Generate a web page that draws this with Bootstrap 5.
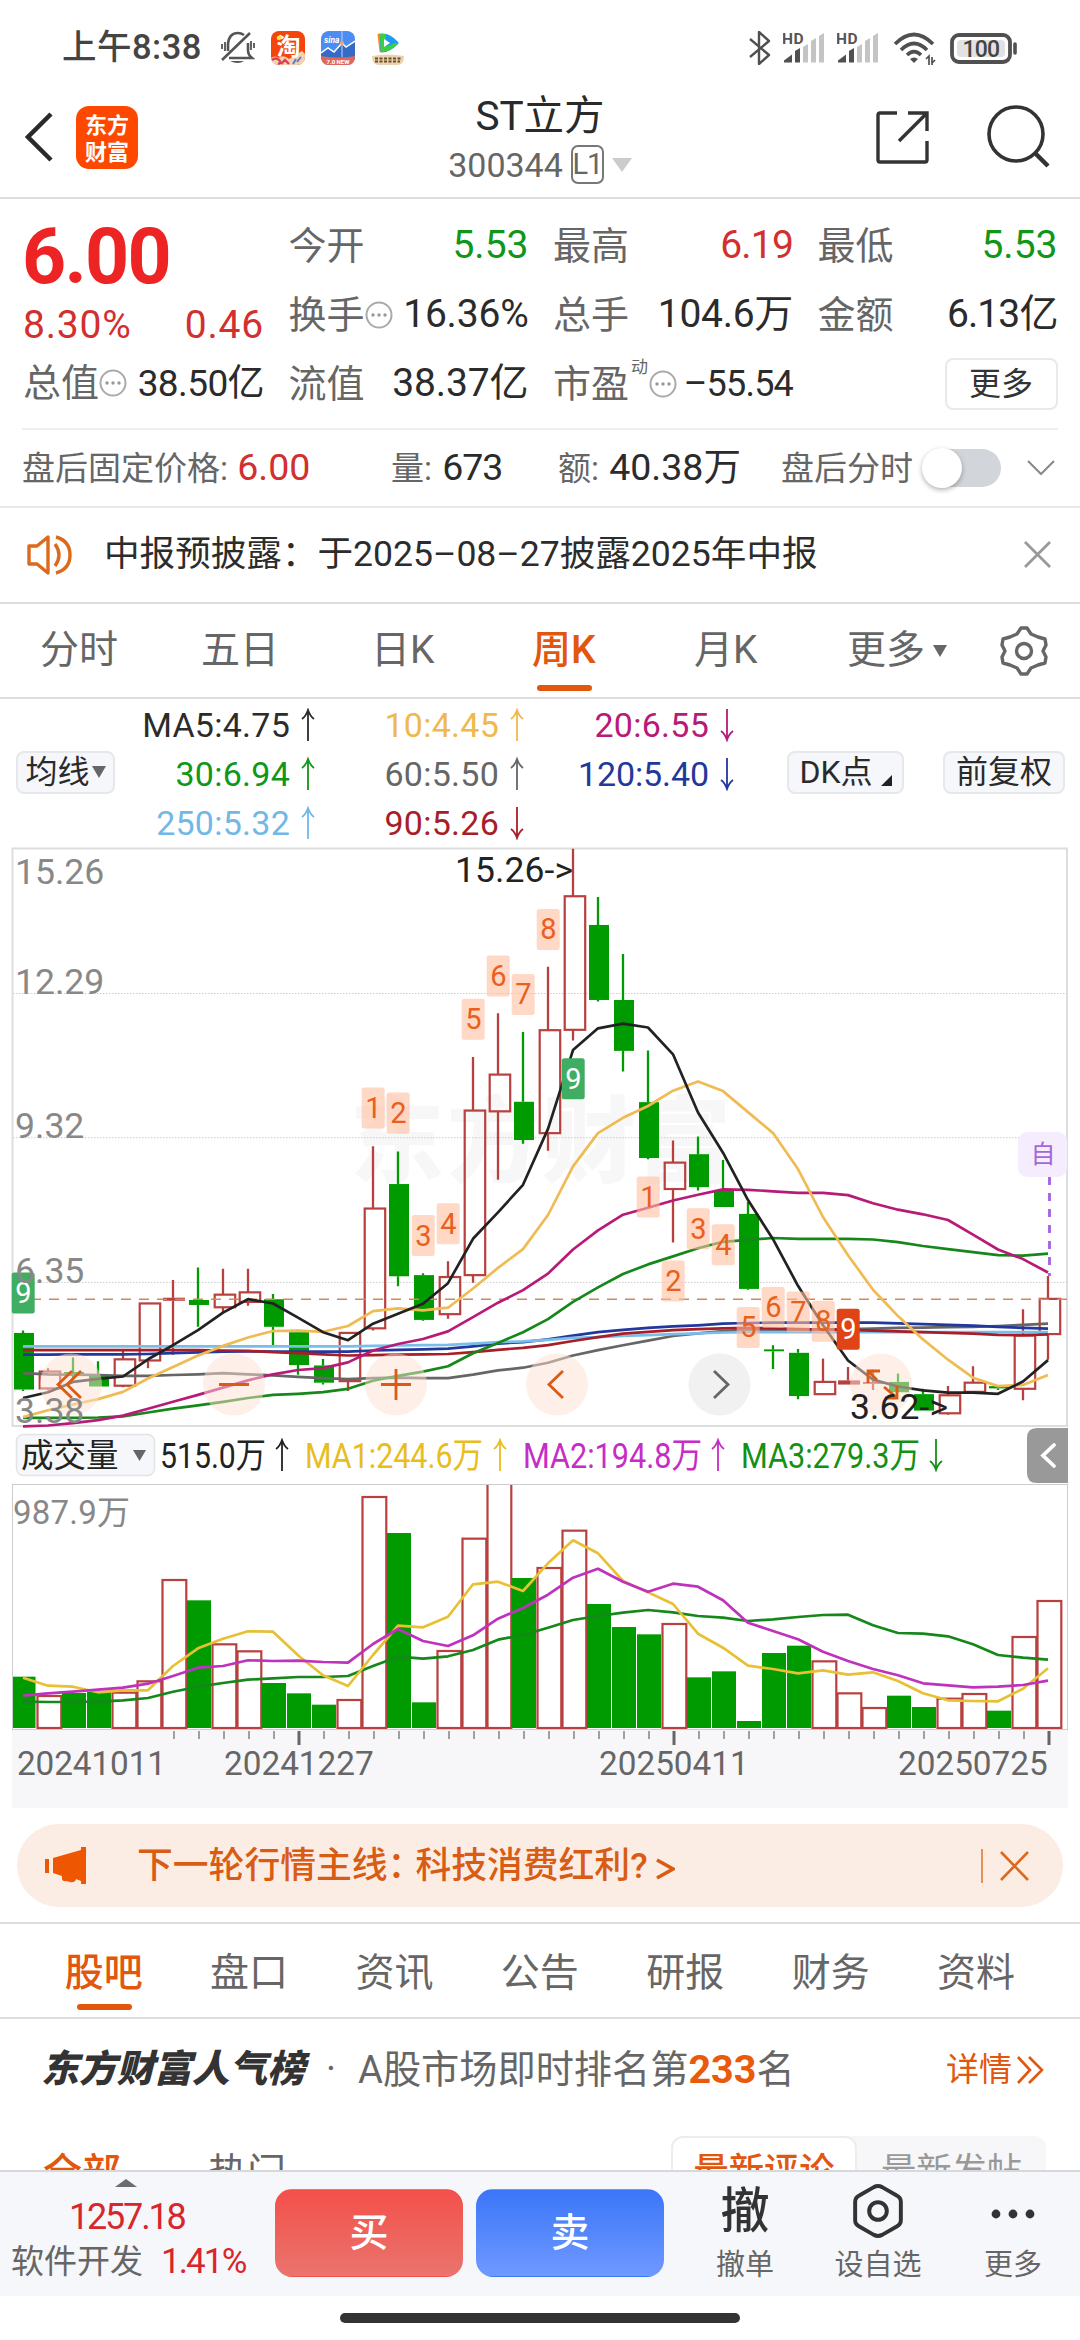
<!DOCTYPE html>
<html lang="zh-CN">
<head>
<meta charset="utf-8">
<meta name="viewport" content="width=1080">
<title>ST立方 300344</title>
<link href="https://cdn.jsdelivr.net/npm/bootstrap@5.3.0/dist/css/bootstrap.min.css" rel="stylesheet">
<style>
body{width:1080px;height:2340px;overflow:hidden;background:#fff;color:#2b2b2b;font-family:Roboto,"Noto Sans CJK SC",sans-serif;line-height:1;font-size:39px}
svg{display:block;flex:none}
.g6{color:#666}.up{color:#d32f2f}.dn{color:#109618}.org{color:#e2570e}
.rule-b{border-bottom:2px solid #ddd}
.statusbar{height:95px;padding:0 60px 0 62px;color:#444}
.clock{font-size:34.5px;font-weight:500;width:159px;letter-spacing:.5px;white-space:nowrap}
.topbar{height:104px;padding:0 30px 18px 25px}
.logo-em{width:62px;height:63px;border-radius:13px;background:#fe4800;color:#fff;font:700 22px/27px "Noto Sans CJK SC",sans-serif;text-align:center;padding-top:4px;margin-left:23px}
.ttlbox{width:300px;margin-left:252px;padding-top:7px}
.ttl{font-size:40.5px;color:#2a2a2a}
.code{font-size:34px;height:40px;color:#666}
.lv{border:2px solid #777;border-radius:7px;width:33px;height:39px;font-size:29px;margin-left:8px;letter-spacing:-1px}
.quote{height:229px;padding:0 22px 0 24px}
.quote>div{width:240px;margin-right:24.5px;flex:none}
.quote>div:last-child{margin-right:0}
.qrow{height:69px;display:flex;align-items:center;justify-content:space-between;white-space:nowrap}
.qrow b,.pctrow b{font-weight:400}
.lbl{color:#666;font-size:38px;display:flex;align-items:center}
.bigp{font-size:77px;font-weight:700;color:#ee2424;height:92px;letter-spacing:-1.7px;padding-top:20px;margin-left:-2px}
.pctrow{height:69px;display:flex;justify-content:space-between;align-items:center;letter-spacing:.8px;margin-left:-1px}
.more{width:113px;height:52px;border:2px solid #e9e9e9;border-radius:8px;font-size:32px;color:#333}
.after{height:78px;margin:0 22px;border-top:2px solid #eee;font-size:33px;white-space:nowrap}
.after b{font-weight:400;font-size:37.5px}
.after>*{flex:none}
.sw{width:78px;height:38px;border-radius:19px;background:#d2d5da}
.sw i{display:block;width:40px;height:40px;margin:-1px 0 0 -1px;border-radius:50%;background:#fff;box-shadow:0 2px 5px rgba(0,0,0,.3)}
.notice{height:96px;padding:0 28px 0 26px;border-top:2px solid #eaeaea;font-size:35.6px;color:#2c2c2c}
.ktabs{height:97px;font-size:39px;color:#666;white-space:nowrap}
.ktabs>*{flex:none}
.ktabs .cur,.btabs .cur{color:#e2570e;font-weight:500}
.cur{position:relative}
.cur::after{content:"";position:absolute;left:50%;margin-left:-27px;width:55px;height:6px;border-radius:3px;background:#e2570e;bottom:var(--ub)}
.malegend{height:141px;padding:1px 0 0 16px}
.magrid{display:grid;grid-template-columns:193px 209px 210px;grid-auto-rows:49px;font-size:34px;text-align:right;letter-spacing:.25px}
.magrid span{display:flex;align-items:center;justify-content:flex-end}
.magrid svg{margin-left:9px}
.chip{border:2px solid #e6e8ec;background:#f6f7fa;border-radius:8px;height:43px;font-size:32px;color:#2a2a2a;display:flex;align-items:center;justify-content:center;white-space:nowrap;flex:none}
.promo{height:83px;margin:15px 17px 15px 17px;border-radius:42px;background:#fcede4;color:#d95c14;font-size:35.8px;padding:0 33px 0 28px;font-weight:500}
.btabs{height:97px;border-top:2px solid #ddd;border-bottom:2px solid #ddd;padding:0 31px;color:#666}
.btabs>div{width:145.4px;text-align:center;height:93px;line-height:98px;flex:none}
.rank{height:117px;padding:0 36px 0 41px;font-size:38.2px;color:#666;white-space:nowrap;padding-bottom:16px}
.rank .brand{font-weight:900;font-style:italic;color:#333;width:277px;font-size:37.7px}
.clipped{height:34px;overflow:hidden;padding:0 34px 0 43px}
.seg{width:375px;height:64px;background:#f7f7fa;border-radius:12px;font-size:35.3px;color:#999}
.seg div{height:64px;padding-top:18px;text-align:center}
.seg .on{width:186px;background:#fff;border:2px solid #ededed;border-radius:12px;color:#e2570e;padding-top:16px;font-weight:500}
.dock{height:126px;background:#f6f7fa;border-top:2px solid #d6d8dc}
.dock>*{flex:none}
.idx{width:275px;font-size:36px;color:#d8262c}
.trade{width:188px;height:88px;border-radius:17px;color:#fff;font-size:39px;font-weight:500;margin-top:17px}
.buy{background:linear-gradient(#f4504a,#ea746e)}
.sell{background:linear-gradient(#3b76f8,#6f99ff);margin-left:13px}
.act{font-size:29px;color:#666;text-align:center}
.act>div{height:52px;margin:13px 0 14px;display:flex;align-items:center;justify-content:center;color:#333}
.homebar{width:400px;height:10px;border-radius:5px;background:#333;margin:17px auto 0}
</style>
</head>
<body>
<svg width="0" height="0" class="position-absolute"><defs>
<symbol id="au" viewBox="0 0 18 34"><path d="M9 33V2M3 11Q7 8 9 2Q11 8 15 11" fill="none" stroke="currentColor" stroke-width="1.8"/></symbol>
<symbol id="ad" viewBox="0 0 18 34"><path d="M9 1V32M3 23Q7 26 9 32Q11 26 15 23" fill="none" stroke="currentColor" stroke-width="1.8"/></symbol>
<symbol id="info" viewBox="0 0 28 28"><circle cx="14" cy="14" r="12.5" fill="none" stroke="#aaa" stroke-width="2"/><g fill="#999"><circle cx="8" cy="14" r="1.7"/><circle cx="14" cy="14" r="1.7"/><circle cx="20" cy="14" r="1.7"/></g></symbol>
<symbol id="sig" viewBox="0 0 42 34"><text x="-1" y="13" font-size="15.5" font-weight="700" fill="#555" letter-spacing=".6">HD</text><path d="M1 31.500v-2l8-6v8z M12 31.500V20l5-3v14.500z" fill="#505050"/><path d="M20 31.500V16l5-3v18.500z M28 31.500V10l5-3v24.500z M36 31.500V5l5-3v29.500z" fill="#c4c4c4"/></symbol>
</defs></svg>

<header class="statusbar d-flex align-items-center">
  <div class="clock">上午8:38</div>
  <svg width="34" height="34" viewBox="0 0 34 34" fill="none" stroke="#555" stroke-width="2.6"><path d="M7 20V13Q8 2 17 2Q20 2 23 4M8 27H31Q27 24 27 19V12M29 2L1 29"/><path d="M9 30H23Q17 34 9 30Z" fill="#555" stroke="none"/><path d="M4 11v9M1 13v5M30 10v9M33 12v5" stroke-width="1.8"/></svg>
  <svg class="ms-3" width="34" height="34" viewBox="0 0 34 34"><rect width="34" height="34" rx="8" fill="#f4460c"/><path d="M0 27Q4 24 8 27Q12 23 18 28L31 20L34 23V26Q34 34 26 34H8Q0 34 0 26Z" fill="#f3d1b5"/><text x="17.500" y="23.500" text-anchor="middle" font-size="24" font-weight="700" fill="#fff">淘</text><circle cx="8" cy="7" r="2.3" fill="#ffe14a"/><path d="M1 29q4-3 7 0t-1 4M10 33l4-4 4 4" stroke="#d9404f" stroke-width="2.4" fill="none"/><path d="M22 33l3-5M26 31l4-5" stroke="#5b7fc0" stroke-width="2"/></svg>
  <svg class="ms-3" width="34" height="34" viewBox="0 0 34 34"><rect width="34" height="34" rx="8" fill="#4d8cf0"/><path d="M0 22L7 17L13 21L21 12L25 16L34 11V28H0Z" fill="#346bc4"/><path d="M21 0V26" stroke="#bcd4fa" stroke-width="1"/><path d="M0 22L7 17L13 21L21 12L25 16L34 10" stroke="#fff" stroke-width="1.500" fill="none"/><circle cx="21" cy="12" r="2" fill="#f7a45a"/><text x="3" y="12" font-size="8.500" font-style="italic" font-weight="700" fill="#fff">sina</text><path d="M0 25Q17 28 34 25Q34 34 26 34H8Q0 34 0 25Z" fill="#e0675a"/><text x="17" y="32.500" text-anchor="middle" font-size="6" font-weight="700" fill="#fff">7.0 NEW</text></svg>
  <svg class="ms-3" width="34" height="34" viewBox="0 0 34 34"><path d="M8 4L10 20" stroke="#ff8a1f" stroke-width="3" stroke-linecap="round"/><path d="M10 4Q18 3 26 12Q18 20 11 20Z" fill="#1a9cf5" stroke="#1a9cf5" stroke-width="3" stroke-linejoin="round"/><path d="M11 20Q18 20 25 13L14 17V4L10 4Z" fill="#3fcf3a" stroke="#3fcf3a" stroke-width="2" stroke-linejoin="round"/><path d="M13 8L19 12L13 16Z" fill="#fff"/><path d="M1 25Q17 22 33 25Q33 34 26 34H8Q1 34 1 25Z" fill="#ead2ae"/><path d="M4 27.500h26M4 30.500h25" stroke="#6c4c22" stroke-width="2.200" stroke-dasharray="3 1.500"/></svg>
  <svg class="ms-auto" width="22" height="34" viewBox="0 0 22 34" fill="none" stroke="#505050" stroke-width="2.4" stroke-linejoin="round"><path d="M1 8L20 24L10 33V1L20 10L1 26"/></svg>
  <svg width="42" height="34" style="margin-left:12px"><use href="#sig"/></svg>
  <svg width="42" height="34" style="margin-left:12px"><use href="#sig"/></svg>
  <svg width="44" height="34" viewBox="0 0 44 34" style="margin-left:14px" fill="none" stroke="#505050" stroke-width="3.6"><path d="M2 13Q21-6 40 13M8 19Q21 6 34 19M14 24Q21 17 28 24"/><path d="M17 28Q21 25 25 28L21 32Z" fill="#505050" stroke="none"/><path d="M33 28l3-3v9M39 34v-8M39 26v6l3-3" stroke-width="1.700"/></svg>
  <svg width="70" height="34" viewBox="0 0 70 34" style="margin-left:13px"><rect x="2" y="4" width="58" height="27" rx="7" fill="none" stroke="#505050" stroke-width="3.8"/><rect x="7" y="9" width="48" height="17" rx="4" fill="#e2e2e2"/><text x="31" y="26" font-size="23" font-weight="500" text-anchor="middle" fill="#444" letter-spacing="-.8">100</text><path d="M65 13v9" stroke="#505050" stroke-width="3.600" stroke-linecap="round"/></svg>
</header>

<nav class="topbar rule-b d-flex align-items-center">
  <svg width="28" height="50" viewBox="0 0 28 50" fill="none" stroke="#2a2a2a" stroke-width="4.5"><path d="M26 2L3 25L26 48"/></svg>
  <div class="logo-em">东方<br>财富</div>
  <div class="ttlbox d-flex flex-column align-items-center">
    <div class="ttl">ST立方</div>
    <div class="code d-flex align-items-center mt-2">300344<span class="lv d-flex align-items-center justify-content-center">L1</span><svg width="20" height="14" class="ms-2"><path d="M0 0H20L10 14Z" fill="#ccc"/></svg></div>
  </div>
  <svg width="54" height="54" viewBox="0 0 54 54" class="ms-auto" fill="none" stroke="#333" stroke-width="3.4"><path d="M21 3H4Q2 3 2 5V50Q2 52 4 52H49Q51 52 51 50V31M32 3H51V21M51 3L23 31"/></svg>
  <svg width="64" height="64" viewBox="0 0 64 64" style="margin-left:56px" fill="none" stroke="#333" stroke-width="3.6"><circle cx="30" cy="29" r="27"/><path d="M49 48L62 61" stroke-width="4.500"/></svg>
</nav>

<section class="quote d-flex">
  <div>
    <div class="bigp">6.00</div>
    <div class="pctrow up"><b>8.30%</b><b>0.46</b></div>
    <div class="qrow" style="height:46px"><span class="lbl" style="margin-left:-1px">总值<svg width="28" height="28" class="ms-0"><use href="#info"/></svg></span><b style="letter-spacing:-.6px;font-size:37px">38.50亿</b></div>
  </div>
  <div class="pt-2 mt-1">
    <div class="qrow"><span class="lbl">今开</span><b class="dn">5.53</b></div>
    <div class="qrow"><span class="lbl">换手<svg width="28" height="28"><use href="#info"/></svg></span><b style="letter-spacing:-.2px">16.36%</b></div>
    <div class="qrow"><span class="lbl">流值</span><b style="letter-spacing:-.1px">38.37亿</b></div>
  </div>
  <div class="pt-2 mt-1">
    <div class="qrow"><span class="lbl">最高</span><b class="up" style="letter-spacing:-.8px">6.19</b></div>
    <div class="qrow"><span class="lbl">总手</span><b style="letter-spacing:-.3px">104.6万</b></div>
    <div class="qrow"><span class="lbl">市盈<sup style="font-size:17px;top:-17px;margin-left:2px">动</sup><svg width="28" height="28" style="margin-left:1px"><use href="#info"/></svg></span><b style="font-size:36px;letter-spacing:-.8px">–55.54</b></div>
  </div>
  <div class="pt-2 mt-1">
    <div class="qrow"><span class="lbl">最低</span><b class="dn">5.53</b></div>
    <div class="qrow"><span class="lbl">金额</span><b style="letter-spacing:-.9px">6.13亿</b></div>
    <div class="qrow justify-content-end"><button class="more btn p-0">更多</button></div>
  </div>
</section>

<section class="after d-flex align-items-center g6">
  <div style="width:369px">盘后固定价格: <b class="up" style="margin-left:1px">6.00</b></div>
  <div style="width:167px">量: <b style="color:#2b2b2b;letter-spacing:-1px;margin-left:2px">673</b></div>
  <div style="width:223px">额: <b style="color:#2b2b2b;margin-left:2px">40.38万</b></div>
  <div style="width:142px">盘后分时</div>
  <div class="sw"><i></i></div>
  <svg class="ms-auto" style="margin-right:3px" width="28" height="16" fill="none" stroke="#888" stroke-width="2"><path d="M1 1L14 14L27 1"/></svg>
</section>

<section class="notice d-flex align-items-center">
  <svg width="50" height="42" viewBox="0 0 50 42" fill="none" stroke="#dd6a1c" stroke-width="3.4"><path d="M3 12H11L22 3V39L11 30H3ZM29 10Q37 21 29 32M30 3Q44 7 44 21Q44 35 30 39" stroke-linejoin="round"/></svg>
  <span style="margin-left:28px">中报预披露：于2025–08–27披露2025年中报</span>
  <svg class="ms-auto" width="28" height="28" stroke="#999" stroke-width="2.8"><path d="M1 1L26 26M26 1L1 26"/></svg>
</section>

<nav class="ktabs d-flex align-items-center rule-b" style="border-top:2px solid #ddd">
  <div style="width:160px;padding-left:40px">分时</div><div style="width:171px;padding-left:41px">五日</div><div style="width:161px;padding-left:40px">日K</div>
  <div style="width:162px;padding-left:40px"><span class="cur" style="--ub:-18px">周K</span></div>
  <div style="width:193px;padding-left:40px">月K</div>
  <div class="d-flex align-items-center">更多<svg width="14" height="12" class="ms-2"><path d="M0 0H14L7 12Z" fill="#666"/></svg></div>
  <svg class="ms-auto" style="margin-right:31px" width="50" height="50" viewBox="0 0 50 50" fill="none" stroke="#666" stroke-width="3.4" stroke-linejoin="round"><path d="M22 2H28L32 8L39 11L46 13L47 19L44 25L47 31L46 37L39 39L32 42L28 48H22L18 42L11 39L4 37L3 31L6 25L3 19L4 13L11 11L18 8Z"/><circle cx="25" cy="25" r="7.5"/></svg>
</nav>

<section class="malegend d-flex">
  <div class="chip align-self-center mt-1" style="width:99px">均线<svg width="14" height="12" style="margin-left:2px"><path d="M0 0H14L7 12Z" fill="#666"/></svg></div>
  <div class="magrid" style="margin-left:9px">
    <span>MA5:4.75<svg width="18" height="34"><use href="#au"/></svg></span>
    <span style="color:#f0b94d">10:4.45<svg width="18" height="34"><use href="#au"/></svg></span>
    <span style="color:#b81a78">20:6.55<svg width="18" height="34"><use href="#ad"/></svg></span>
    <span class="dn">30:6.94<svg width="18" height="34"><use href="#au"/></svg></span>
    <span class="g6">60:5.50<svg width="18" height="34"><use href="#au"/></svg></span>
    <span style="color:#22389c;letter-spacing:-.1px">120:5.40<svg width="18" height="34"><use href="#ad"/></svg></span>
    <span style="color:#72b8e6">250:5.32<svg width="18" height="34"><use href="#au"/></svg></span>
    <span style="color:#a81e28">90:5.26<svg width="18" height="34"><use href="#ad"/></svg></span>
  </div>
  <div class="chip align-self-center mt-1" style="width:117px;margin-left:51px">DK点<svg width="11" height="28" class="ms-2"><path d="M11 17V28H0Z" fill="#222"/></svg></div>
  <div class="chip align-self-center mt-1" style="width:122px;margin-left:39px">前复权</div>
</section>

<svg id="kline" width="1080" height="588" viewBox="0 840 1080 588"></svg>
<svg id="volhead" width="1080" height="56" viewBox="0 1428 1080 56"></svg>
<svg id="volume" width="1080" height="325" viewBox="0 1484 1080 325"></svg>

<section class="promo d-flex align-items-center">
  <svg width="42" height="38" viewBox="0 0 42 38" fill="#ee5602"><path d="M0 12h4v14H0zM8 11L36 3V0h5v37h-5v-3L31 32Q30 36 25 35L21 34Q16 35 17 29L8 26Z"/></svg>
  <span style="margin-left:50px;padding-top:3px">下一轮行情主线<span style="margin-right:-8px">：</span>科技消费红利?&nbsp;<svg class="d-inline" width="19" height="22" fill="none" stroke="#d95c14" stroke-width="3.6"><path d="M1 2L17 11L1 20"/></svg></span>
  <svg class="ms-auto" width="50" height="34" stroke="#dd6a1c" stroke-width="2.6"><path d="M2 0V34" stroke-width="1.4"/><path d="M21 3L48 31M48 3L21 31"/></svg>
</section>

<nav class="btabs d-flex">
  <div class="cur" style="--ub:7px">股吧</div><div>盘口</div><div>资讯</div><div>公告</div><div>研报</div><div>财务</div><div>资料</div>
</nav>

<section class="rank d-flex align-items-center">
  <span class="brand">东方财富人气榜</span><span style="width:40px;padding-left:8px">·</span>
  <span>A股市场即时排名第<b style="color:#ea5a0c;font-size:39.500px">233</b>名</span>
  <span class="ms-auto d-flex align-items-center org" style="font-size:33px">详情<svg width="28" height="30" class="ms-1" fill="none" stroke="#e2570e" stroke-width="2.6"><path d="M2 2L14 15L2 28M13 2L26 15L13 28"/></svg></span>
</section>

<section class="clipped d-flex g6">
  <div class="org fw-medium" style="width:165px;padding-top:18px">全部</div><div style="padding-top:18px">热门</div>
  <div class="seg ms-auto d-flex"><div class="on">最新评论</div><div class="flex-grow-1">最新发帖</div></div>
</section>

<footer>
  <div class="dock d-flex">
    <div class="idx">
      <svg width="22" height="8" style="margin:7px 0 0 115px"><path d="M0 8H22L11 0Z" fill="#6b6b74"/></svg>
      <div style="padding:12px 0 0 69px;letter-spacing:-2.2px">1257.18</div>
      <div class="d-flex align-items-center" style="padding:9px 0 0 11px"><span class="g6" style="font-size:33px;width:150px">软件开发</span><span style="font-size:35px;letter-spacing:-1.9px">1.41%</span></div>
    </div>
    <button class="trade buy btn p-0">买</button>
    <button class="trade sell btn p-0">卖</button>
    <div class="act" style="width:162px"><div style="font-size:49px;font-weight:500">撤</div><span>撤单</span></div>
    <div class="act" style="width:104px"><div><svg width="50" height="54" viewBox="0 0 48 52" fill="none" stroke="#333" stroke-width="3.8"><path d="M20 3Q24 1 28 3L42 11Q46 13 46 17V35Q46 39 42 41L28 49Q24 51 20 49L6 41Q2 39 2 35V17Q2 13 6 11Z"/><circle cx="24" cy="26" r="8.5"/></svg></div><span>设自选</span></div>
    <div class="act" style="width:166px"><div><svg width="44" height="44" fill="#333"><circle cx="5" cy="25" r="4.4"/><circle cx="22" cy="25" r="4.4"/><circle cx="39" cy="25" r="4.4"/></svg></div><span>更多</span></div>
  </div>
  <div class="homebar"></div>
</footer>

<script src="https://cdn.jsdelivr.net/npm/bootstrap@5.3.0/dist/js/bootstrap.bundle.min.js"></script>
<script>
const RED='#b8403e', GREEN='#009b00';
const py=v=>840+v/2.613;      // price level -> y
const vy=v=>1420+v/3;         // volume level -> y
const cx=i=>23+25*i;
// weekly candles: direction, high, body top, body bottom, low
const candles=`G 1282 1288 1436 1440|R 1380 1389 1433 1438|G 1352 1390 1397 1410|G 1362 1397 1428 1428|R 1334 1357 1426 1430|R 1211 1211 1360 1380|R 1150 1196 1204 1345|G 1117 1202 1215 1272|R 1120 1188 1221 1235|R 1120 1182 1207 1217|G 1186 1200 1272 1320|G 1280 1286 1372 1397|G 1356 1373 1418 1423|R 1287 1288 1414 1440|R 800 963 1276 1282|G 814 899 1140 1166|G 1132 1137 1254 1256|R 1101 1142 1239 1251|R 567 707 1137 1157|R 453 613 709 888|G 502 684 784 794|R 331 497 766 812|R 23 147 496 524|G 149 222 418 422|G 298 418 551 605|G 550 685 831 834|R 785 843 912 1052|G 775 821 907 916|G 836 917 959 959|G 946 977 1173 1175|G 1320 1331 1336 1382|G 1330 1340 1453 1461|R 1355 1416 1448 1448|R 1377 1412 1423 1423|R 1384 1416 1421 1437|G 1394 1416 1443 1443|G 1434 1448 1491 1491|R 1427 1451 1498 1502|R 1375 1418 1442 1442|G 1424 1427 1433 1437|R 1226 1295 1434 1464|R 1139 1199 1291 1358`.split('|').map(s=>{const a=s.split(' ');return [a[0],...a.slice(1).map(Number)]});
const ma=[
['#666',[1393,1396,1397,1398,1400,1400,1398,1396,1393,1396,1399,1403,1406,1409,1406,1405,1406,1406,1397,1386,1379,1366,1347,1333,1320,1308,1296,1289,1283,1280,1280,1280,1279,1278,1277,1275,1274,1273,1272,1270,1267,1264]],
['#22389c',[1345,1345,1344,1344,1344,1343,1341,1339,1337,1336,1337,1337,1337,1337,1334,1332,1331,1329,1323,1316,1312,1305,1295,1286,1280,1275,1271,1268,1264,1262,1261,1261,1261,1261,1261,1263,1265,1267,1269,1272,1275,1277]],
['#79bde9',[1323,1323,1323,1323,1323,1323,1323,1323,1323,1323,1323,1323,1323,1323,1322,1321,1320,1319,1316,1312,1310,1306,1301,1299,1296,1294,1291,1289,1287,1286,1286,1286,1286,1286,1286,1286,1286,1286,1286,1286,1286,1286]],
['#a81e28',[1333,1333,1333,1333,1333,1333,1333,1333,1334,1335,1338,1341,1344,1347,1346,1345,1344,1343,1338,1332,1327,1320,1309,1299,1290,1285,1281,1278,1276,1275,1276,1278,1279,1280,1282,1284,1286,1288,1290,1293,1294,1292]],
['#16871a',[1510,1510,1510,1509,1506,1496,1486,1477,1468,1458,1450,1447,1443,1434,1413,1400,1389,1375,1341,1314,1286,1252,1207,1169,1134,1109,1088,1067,1050,1045,1040,1042,1042,1042,1044,1051,1061,1069,1077,1085,1086,1081]],
['#b81a78',[1532,1530,1524,1516,1504,1486,1468,1450,1431,1412,1396,1385,1380,1365,1334,1317,1304,1284,1247,1209,1176,1133,1070,1020,979,961,942,927,913,914,918,922,922,928,949,966,978,993,1031,1070,1095,1130]],
['#efbb52',[1508,1490,1475,1461,1442,1407,1377,1347,1322,1300,1283,1282,1285,1270,1231,1224,1229,1222,1172,1118,1069,980,853,766,726,695,655,631,656,711,766,860,985,1085,1175,1244,1305,1358,1405,1427,1424,1398]],
['#222',[1458,1443,1416,1408,1402,1357,1320,1281,1235,1200,1211,1248,1286,1307,1264,1238,1212,1158,1042,973,901,755,549,492,480,490,560,712,817,941,1043,1165,1268,1360,1410,1428,1438,1444,1444,1447,1415,1359]]];
const line=(c,a,f)=>`<polyline fill="none" stroke="${c}" stroke-width="2.7" stroke-linejoin="round" points="${a.map((v,i)=>cx(i)+','+f(v).toFixed(1)).join(' ')}"/>`;
const txt=(x,y,s,fill,size,extra='')=>`<text x="${x}" y="${y}" fill="${fill}" font-size="${size}" ${extra}>${s}</text>`;
let k='<rect x="12.5" y="848.5" width="1054.5" height="577.5" fill="#fff" stroke="#ddd" stroke-width="2"/>';
k+='<g font-size="94" font-weight="900" fill="#f7f7f7"><text x="350" y="1175">东</text><text x="447" y="1175">方</text><text x="542" y="1175">财</text><text x="637" y="1175">富</text></g>';
for(const y of [993.5,1137.7,1282.4]) k+=`<path d="M13 ${y}H1067" stroke="#ccc" stroke-dasharray="1.5 1.5"/>`;
candles.forEach(([d,h,t,b,l],i)=>{
  const x=cx(i), c=d=='R'?RED:GREEN; t=py(t);b=py(b);
  k+=`<path d="M${x} ${py(h)}V${t}M${x} ${b}V${py(l)}" stroke="${c}" stroke-width="2.3"/>`;
  if(d=='R'&&b-t>5) k+=`<rect x="${x-8.3}" y="${t}" width="20.5" height="${b-t}" fill="none" stroke="${c}" stroke-width="2.2"/>`;
  else k+=`<rect x="${x-(d=='R'?10:9)}" y="${t}" width="${d=='R'?22:20}" height="${Math.max(b-t,1.6)}" fill="${c}"/>`;
});
k+='<path d="M13 1299.3H1067" stroke="#d08a5a" stroke-width="1.4" stroke-dasharray="10 8"/>';
ma.forEach(m=>k+=line(m[0],m[1],py));
// nine-turn markers: candle index, digit, level, style
[[0,9,1130,'g'],[14,1,647],[15,2,660],[16,3,980],[17,4,949],[18,5,415],[19,6,302],[20,7,350],[21,8,180],[22,9,570,'g'],[25,1,879],[26,2,1099],[27,3,962],[28,4,1004],[29,5,1220],[30,6,1168],[31,7,1180],[32,8,1204],[33,9,1225,'r']].forEach(([i,n,v,s])=>{
  const f=s=='g'?'#3fae63':s=='r'?'#e04315':'rgba(255,190,160,.6)';
  k+=`<rect x="${cx(i)-11.3}" y="${py(v)}" width="23" height="41" rx="2.5" fill="${f}"/>`+txt(cx(i)+.3,py(v)+30.5,n,s?'#fff':'#e8601c',29,'text-anchor="middle"');
});
const circ=(x,f)=>`<circle cx="${x}" cy="1384.5" r="31" fill="${f}"/>`;
const st='fill="none" stroke="#dd5a14" stroke-width="2.8"';
[71,234,396,557,881].forEach(x=>k+=circ(x,'rgba(253,226,210,.5)'));
k+=circ(719.5,'rgba(232,232,232,.6)');
k+=`<path ${st} d="M72 1371L58 1384.5L72 1398M81 1371L67 1384.5L81 1398M219 1384.5H249M381 1384.5H411M396 1369V1400M563 1371L549 1384.5L563 1398"/>
<path fill="none" stroke="#666" stroke-width="2.8" d="M714 1371L728 1384.5L714 1398"/>
<path ${st} d="M868 1383V1371H880M869 1372L877 1380M897 1386V1398H885M884 1387L896 1397"/>`;
k+=txt(15,884,'15.26','#888',35.6)+txt(15,994,'12.29','#888',35.6)+txt(15,1138,'9.32','#888',35.6)+txt(15,1283,'6.35','#888',35.6)+txt(15,1423,'3.38','#888',35.6);
k+=txt(455,882,'15.26-&gt;','#222',35.5,'textLength="118"')+txt(850,1419,'3.62-&gt;','#222',35.5,'textLength="98"');
k+='<rect x="1018" y="1132" width="49" height="45" rx="9" fill="#f5edfe"/>'+txt(1043,1163,'自','#a368d8',25,'text-anchor="middle"')+'<path d="M1049.5 1177V1276" stroke="#a66bdc" stroke-width="3" stroke-dasharray="8 8"/>';
kline.innerHTML=k;

const arrow=(x,c,up)=>`<use href="#${up?'au':'ad'}" x="${x-9}" y="1438" width="18" height="34" color="${c}"/>`;
const sq=(x,w,s,c)=>txt(x,1468,s,c,35.5,`textLength="${w}" lengthAdjust="spacingAndGlyphs"`);
volhead.innerHTML='<rect x="16.5" y="1434.5" width="138" height="41" rx="7" fill="#f6f7fa" stroke="#e2e4e8" stroke-width="1.5"/>'+txt(21,1467,'成交量','#222',32.5)+'<path d="M133 1450H146L139.500 1461Z" fill="#666"/>'
+sq(160,106,'515.0万','#222')+arrow(282,'#222',1)+sq(305,178,'MA1:244.6万','#e8bd1f')+arrow(500,'#e8bd1f',1)+sq(523,179,'MA2:194.8万','#c62cc6')+arrow(718,'#c62cc6',1)+sq(741,179,'MA3:279.3万','#149014')+arrow(936,'#149014',0)
+'<path d="M1068 1428H1037Q1027 1428 1027 1438V1473Q1027 1483 1037 1483H1068Z" fill="#999"/><path d="M1054 1445L1043 1455.500L1054 1466" fill="none" stroke="#fff" stroke-width="3.8" stroke-linecap="round"/>';

const vol=[770,828,819,816,818,784,480,541,673,694,789,820,854,840,231,339,847,693,356,180,474,444,332,552,621,643,612,772,754,903,699,677,724,820,864,827,861,836,822,872,651,543];
const vma=[['#16871a',[845,846,846,845,841,834,815,800,789,779,775,771,771,768,738,710,716,709,690,659,645,623,600,588,578,570,577,588,593,603,598,591,585,584,616,639,641,649,673,705,713,719]],
['#e8c034',[773,797,800,817,811,811,738,685,656,634,635,706,766,798,705,617,622,590,493,485,513,430,361,400,483,517,552,641,683,737,747,760,751,764,757,783,820,841,843,844,806,745]],
['#be32be',[827,820,815,809,803,791,768,743,738,721,723,722,726,728,672,627,663,678,646,596,564,524,473,446,485,515,491,500,541,608,633,658,695,723,747,766,790,796,802,800,795,782]]];
let v='<rect x="12" y="1730" width="1056" height="78" fill="#f7f7fa"/><clipPath id="vc"><rect x="12" y="1484" width="1056" height="246"/></clipPath><g clip-path="url(#vc)">';
vol.forEach((h,i)=>{const x=cx(i)+1,y=vy(h);
  v+=candles[i][0]=='R'?`<rect x="${x-11.5}" y="${y}" width="23.8" height="${1728-y}" fill="#fff" stroke="${RED}" stroke-width="2.2"/>`:`<rect x="${Math.max(x-12,13)}" y="${y}" width="${i?24:22.500}" height="${1728-y}" fill="${GREEN}"/>`;});
vma.forEach(m=>v+=line(m[0],m[1],vy));
v+='</g><rect x="12.5" y="1484.5" width="1055" height="245" fill="none" stroke="#ccc"/>'+txt(13,1524,'987.9万','#888',33,'textLength="117"');
for(let i=6;i<42;i++){const big=i%15==11;v+=`<path d="M${cx(i)+1} 1731v${big?14:8}" stroke="#666" stroke-width="${big?3:1.2}"/>`}
[[17,'20241011'],[224,'20241227'],[599,'20250411'],[898,'20250725']].forEach(([x,s])=>v+=txt(x,1775,s,'#666',33.3,s=='20241011'?'letter-spacing="-.1"':''));
volume.innerHTML=v;
</script>
</body>
</html>
